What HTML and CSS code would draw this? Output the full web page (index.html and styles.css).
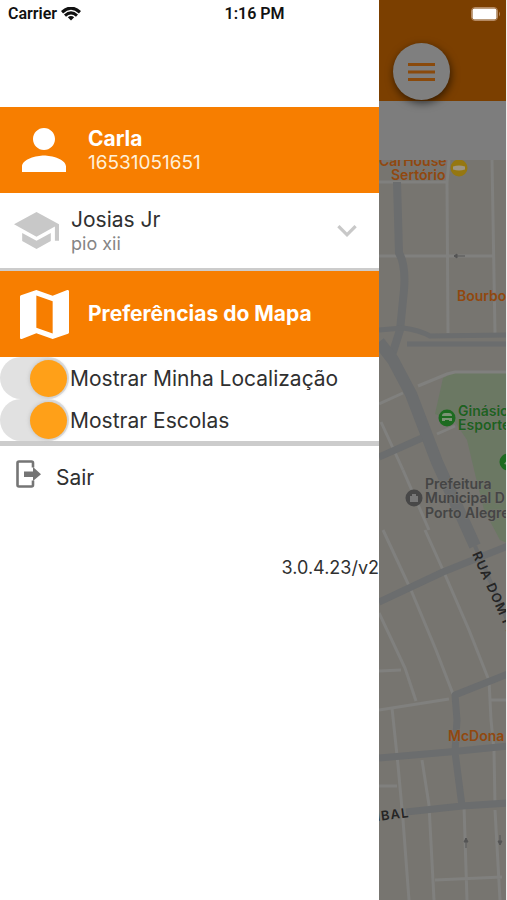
FILE: index.html
```html
<!DOCTYPE html>
<html lang="pt-BR">
<head>
  <meta charset="utf-8">
  <meta name="viewport" content="width=device-width, initial-scale=1">
  <title>Preferências do Mapa</title>
  <link rel="stylesheet" href="styles.css">
</head>
<body>
  <div class="screen">
    <header class="status">
      <span class="carrier">Carrier
        <svg class="wifi" viewBox="0 0 20 14" aria-hidden="true">
          <path d="M1 5.200Q10-2.800 19 5.200" stroke-width="3.200"/>
          <path d="M4 8.600Q10 3.200 16 8.600" stroke-width="3"/>
          <path d="M6.800 10.300Q10 7.700 13.200 10.300L10 13.500Z" class="wifi-dot"/>
        </svg>
      </span>
      <span class="time">1:16 PM</span>
      <svg class="battery" viewBox="0 0 30 14" aria-hidden="true">
        <rect x="0.500" y="0.500" width="26" height="13" rx="3.500" fill="none" stroke="#b58a63"/>
        <rect x="1.500" y="1.500" width="24" height="11" rx="2" fill="#fff"/>
        <path d="M28 4.500q2 2.500 0 5z" fill="#b58a63"/>
      </svg>
    </header>

    <nav class="drawer">
      <section class="banner">
        <svg class="person" viewBox="4 4 16 16" aria-hidden="true"><path d="M12 12c2.210 0 4-1.790 4-4s-1.790-4-4-4-4 1.790-4 4 1.790 4 4 4zm0 2c-2.670 0-8 1.340-8 4v2h16v-2c0-2.660-5.330-4-8-4z"/></svg>
        <div>
          <h1 class="title">Carla</h1>
          <p class="number">16531051651</p>
        </div>
      </section>

      <button class="student" type="button">
        <svg class="school" viewBox="1 3 22 18" aria-hidden="true"><path d="M5 13.180v4L12 21l7-3.820v-4L12 17l-7-3.820zM12 3L1 9l11 6 9-4.910V17h2V9L12 3z"/></svg>
        <span class="student-text">
          <span class="student-name">Josias Jr</span>
          <span class="student-school">pio xii</span>
        </span>
        <svg class="chevron" viewBox="6 8 12 8" aria-hidden="true"><path d="M16.590 8.590L12 13.170 7.410 8.590 6 10l6 6 6-6z"/></svg>
      </button>

      <section class="banner">
        <svg class="map-icon" viewBox="3 3 18 18" aria-hidden="true"><path d="M20.500 3l-.160.030L15 5.100 9 3 3.360 4.900c-.210.070-.360.250-.360.480V20.500c0 .280.220.500.500.500l.160-.030L9 18.900l6 2.100 5.640-1.900c.210-.070.360-.250.360-.480V3.500c0-.280-.220-.500-.500-.500zM15 19l-6-2.110V5l6 2.110V19z"/></svg>
        <h2 class="title">Preferências do Mapa</h2>
      </section>

      <div class="switches">
        <label class="switch-row"><input class="switch" type="checkbox" role="switch" checked>Mostrar Minha Localização</label>
        <label class="switch-row"><input class="switch" type="checkbox" role="switch" checked>Mostrar Escolas</label>
      </div>

      <button class="exit" type="button">
        <svg class="exit-icon" viewBox="0 0 25 28" aria-hidden="true">
          <path d="M17 7.500V3Q17 1.500 15.500 1.500H3Q1.500 1.500 1.500 3V25Q1.500 26.500 3 26.500H15.500Q17 26.500 17 25V20.500" fill="none" stroke="#757575" stroke-width="2.600"/>
          <path d="M8 11.500H17V7L25 14.200 17 21V17H8Z" fill="#757575"/>
        </svg>
        <span>Sair</span>
      </button>
      <p class="version">3.0.4.23/v2</p>
    </nav>

    <main class="backdrop">
      <div class="toolbar">
        <button class="menu" type="button" aria-label="Menu">
          <svg class="menu-icon" viewBox="0 0 27 18" aria-hidden="true"><path d="M0 1.500H27M0 9H27M0 16.500H27" stroke="#8a4a0c" stroke-width="3"/></svg>
        </button>
      </div>
      <div class="subbar"></div>
      <svg class="map" viewBox="0 0 127 740" preserveAspectRatio="xMinYMin slice" role="img" aria-label="Mapa">
        <path class="park" d="M64 218L76 212H128V383L121 380 105 350 97 318 88 280 76 262 56 254Z"/>
        <g class="street">
          <path d="M0 22H68M70 0L68 22 69 173M113 0L116 173M0 96H114"/>
          <path d="M0 244L24 233M39 226L68 214 76 212H128M58 274L76 266M2 262L24 310"/>
          <path d="M4 370L32 430 57 490 74 534M46 370L64 410 90 470 109 518M0 453L26 508 37 541M0 511L22 510M0 550L70 539"/>
          <path d="M24 310L50 370"/>
          <path d="M13 548L19 605 24 660 30 740M0 626H18M43 600L50 645 55 740M85 646L88 740M116 650L121 740M110 520L112 560 115 590 116 645M56 720L123 717M112 540H128"/>
        </g>
        <g class="road">
          <path d="M18 22L20 93Q27 105 25 130L21 170 13 195" stroke-width="8"/>
          <path d="M0 170L24 168Q40 170 51 176L128 175M28 184H128" stroke-width="5"/>
          <path d="M0 182L14 200 32 234 58 302 82 355 96 386" stroke-width="12"/>
          <path d="M96 386L129 462" stroke-width="4"/>
          <path d="M0 297L43 278" stroke-width="7"/>
          <path d="M0 442L64 412 129 386" stroke-width="7"/>
          <path d="M0 598L70 592 129 586M76 592L78 560 76 535 129 514M76 592L83 646M27 652L83 646 129 643" stroke-width="7"/>
        </g>
        <path class="arrow" d="M75 96H86M75 96l3-2v4zM87 678v10M87 678l-2 4h4zM121 675v10M121 685l-2-4h4z"/>
        <g class="place food">
          <text x="0" y="6">CarHouse</text><text x="12" y="20">Sertório</text>
          <text x="78" y="141">Bourbo</text><text x="69" y="581">McDona</text>
        </g>
        <g class="place sport"><text x="79" y="256">Ginásio</text><text x="79" y="270">Esporte</text></g>
        <g class="place office"><text x="46" y="329">Prefeitura</text><text x="46" y="343">Municipal D</text><text x="46" y="358">Porto Alegre</text></g>
        <g class="way"><text transform="translate(93 394) rotate(66)">RUA DOM PE</text><text transform="translate(-2 661) rotate(-7)">IBAL</text></g>
        <circle cx="80" cy="8" r="8.500" fill="#957711"/>
        <path d="M74 6.500q6-2 12 0v3q-6 2-12 0z" fill="#9d9583"/>
        <g fill="#1d6b20"><circle cx="68" cy="258" r="8.500"/><circle cx="129" cy="302" r="8.500"/></g>
        <path d="M63 256q0-3 3-3h4q3 0 3 3zM63 258h10v3h-3v-1h-4v1h-3zM125 304l4-5v6z" fill="#7c9375"/>
        <circle cx="35" cy="338" r="8.500" fill="#484848"/>
        <path d="M31 342v-6h2v-2h4v2h2v6z" fill="#777"/>
      </svg>
    </main>
  </div>
</body>
</html>
```
FILE: styles.css
```css
* {
  box-sizing: border-box;
}

body,
h1,
h2,
p {
  margin: 0;
}

body {
  background: #fff;
  color: #303030;
  font-family: Inter, "Liberation Sans", sans-serif;
}

button {
  border: 0;
  padding: 0;
  background: none;
  color: inherit;
  font: inherit;
  text-align: left;
}

svg {
  display: block;
  flex: none;
}

.screen {
  position: relative;
  display: grid;
  grid-template-columns: 379fr 128fr;
  min-height: 100vh;
}

/* Status bar lies over both the drawer and the map */
.status {
  position: absolute;
  inset: 0 0 auto;
  z-index: 2;
  display: grid;
  grid-template-columns: 1fr auto 1fr;
  align-items: center;
  height: 27px;
  padding: 0 6px 0 8px;
  color: #111;
  font: 600 16px Roboto, sans-serif;
}

.carrier {
  display: flex;
  align-items: center;
  gap: 4px;
}

.wifi {
  width: 20px;
  height: 14px;
  fill: none;
  stroke: #111;
}

.wifi-dot {
  fill: #111;
  stroke: none;
}

.battery {
  justify-self: end;
  width: 30px;
  height: 14px;
}

.drawer {
  min-width: 0;
  padding-top: 107px;
}

.banner {
  display: flex;
  align-items: center;
  height: 86px;
  background: #f77e00;
  color: #fff;
}

.banner svg {
  fill: #fff;
}

.person {
  width: 44px;
  height: 44px;
  margin: 0 22px;
}

.map-icon {
  width: 49px;
  height: 49px;
  margin: 0 19px 0 20px;
}

.title {
  font-size: 21px;
  font-weight: 700;
  line-height: 26px;
}

.number {
  color: #fff0d8;
  font-size: 19px;
  line-height: 22px;
}

.student {
  display: flex;
  align-items: center;
  width: 100%;
  height: 78px;
  padding: 0 22px 0 14px;
  border-bottom: 3px solid #ccc;
}

.school {
  width: 45px;
  height: 37px;
  fill: #c8c8c8;
}

.student-text {
  display: grid;
  flex: 1;
  margin-left: 12px;
}

.student-name {
  font-size: 21px;
  line-height: 26px;
}

.student-school {
  color: #858585;
  font-size: 18px;
  line-height: 22px;
}

.chevron {
  width: 20px;
  height: 13px;
  fill: #c8c8c8;
}

.switches {
  border-bottom: 5px solid #ccc;
}

.switch-row {
  display: flex;
  align-items: center;
  gap: 1px;
  height: 42px;
  font-size: 21px;
  white-space: nowrap;
}

.switch {
  display: flex;
  flex: none;
  align-items: center;
  justify-content: flex-end;
  appearance: none;
  width: 69px;
  height: 42px;
  margin: 0;
  border-radius: 21px;
  background: #e1e1e1;
}

.switch::before {
  content: "";
  width: 37px;
  height: 37px;
  margin-right: 2px;
  border-radius: 50%;
  background: #ffa018;
  box-shadow: 0 0 4px #bbb;
}

.exit {
  display: flex;
  align-items: center;
  gap: 15px;
  width: 100%;
  padding: 14px 16px 12px;
  font-size: 21px;
  line-height: 36px;
}

.exit-icon {
  width: 25px;
  height: 28px;
  margin-bottom: 8px;
}

.version {
  margin-top: 48px;
  font-size: 18px;
  line-height: 24px;
  text-align: right;
}

.backdrop {
  display: flex;
  flex-direction: column;
  min-width: 0;
  border-right: 1px solid #eee;
  background: #777570;
}

.toolbar {
  height: 101px;
  padding: 43px 0 0 14px;
  background: #7b3f00;
}

.menu {
  position: relative;
  display: grid;
  place-items: center;
  width: 57px;
  height: 57px;
  border-radius: 50%;
  background: #7f7f7f;
  box-shadow: 1px 3px 8px #0009;
}

.menu-icon {
  width: 27px;
  height: 18px;
}

.subbar {
  height: 59px;
  background: #7d7d7d;
}

.map {
  flex: 1;
  width: 100%;
  min-height: 0;
}

.park {
  fill: #6b7863;
}

.street {
  fill: none;
  stroke: #80807e;
  stroke-width: 3;
}

.road {
  fill: none;
  stroke: #6b6d6e;
  stroke-linejoin: round;
}

.arrow {
  fill: #555;
  stroke: #555;
}

.place {
  font-size: 14px;
  font-weight: 600;
  stroke: #777570;
  stroke-width: 1px;
  paint-order: stroke;
}

.food {
  fill: #91480f;
}

.sport {
  fill: #1d621f;
}

.office {
  fill: #454545;
}

.way {
  fill: #252525;
  font-size: 13px;
  font-weight: 600;
  letter-spacing: 1px;
}
```
